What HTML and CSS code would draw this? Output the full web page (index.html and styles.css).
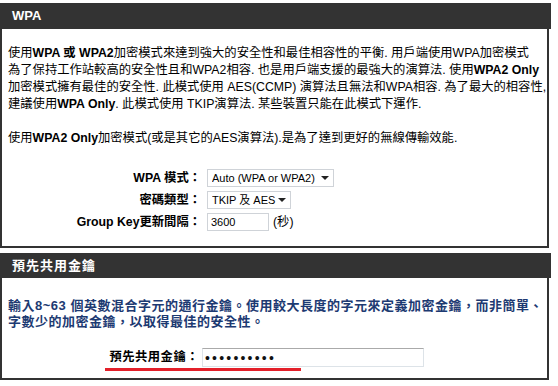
FILE: index.html
```html
<!DOCTYPE html>
<html>
<head>
<meta name="viewport" content="width=device-width, initial-scale=1.0">
<link rel="stylesheet" href="styles.css">
</head>
<body>

<div class="panel">
  <div class="panel-head">WPA</div>
  <div class="panel-body">
    <p class="desc">使用<b>WPA 或 WPA2</b>加密模式來達到強大的安全性和最佳相容性的平衡. 用戶端使用WPA加密模式<br>為了保持工作站較高的安全性且和WPA2相容. 也是用戶端支援的最強大的演算法. 使用<b>WPA2 Only</b><br>加密模式擁有最佳的安全性. 此模式使用 AES(CCMP) 演算法且無法和WPA相容. 為了最大的相容性,<br>建議使用<b>WPA Only</b>. 此模式使用 TKIP演算法. 某些裝置只能在此模式下運作.</p>
    <p class="desc">使用<b>WPA2 Only</b>加密模式(或是其它的AES演算法).是為了達到更好的無線傳輸效能.</p>
    <div class="fields">
      <label>WPA 模式：</label>
      <span class="select mode">
        <select>
          <option>Auto (WPA or WPA2)</option>
          <option>WPA2 Only</option>
          <option>WPA Only</option>
        </select>
      </span>
      <label>密碼類型：</label>
      <span class="select cipher">
        <select>
          <option>TKIP 及 AES</option>
          <option>TKIP</option>
          <option>AES</option>
        </select>
      </span>
      <label>Group Key更新間隔：</label>
      <span class="interval"><input type="text" class="text-input" value="3600"> (秒)</span>
    </div>
  </div>
</div>

<div class="panel psk">
  <div class="panel-head">預先共用金鑰</div>
  <div class="panel-body">
    <p class="note">輸入8~63 個英數混合字元的通行金鑰。使用較大長度的字元來定義加密金鑰，而非簡單、<br>字數少的加密金鑰，以取得最佳的安全性。</p>
    <div class="psk-row">
      <label>預先共用金鑰：</label>
      <input type="password" class="psk-input" value="1234567890">
      <span class="mark"></span>
    </div>
  </div>
</div>

</body>
</html>
```

FILE: styles.css
```css
* {box-sizing: border-box;}
body {
  margin: 0;
  font: 12.3px/17px "Liberation Sans", "Noto Sans CJK TC", sans-serif;
  color: #000;
  background: #fff;
}
.panel {
  width: 551px;
  margin-top: 3px;
}
.panel.psk {
  margin-top: 5px;
}
.panel-head {
  background: #333;
  color: #fff;
  font-weight: bold;
  font-size: 13px;
  height: 26px;
  line-height: 26px;
  padding-left: 12px;
}
.psk .panel-head {
  height: 25px;
  line-height: 25px;
  letter-spacing: 1px;
}
.panel-body {
  border: 2px solid #333;
  border-top: 0;
  margin-right: 2px;
  padding: 16px 6px 15px;
}
.psk .panel-body {
  padding: 20px 6px 11px;
}
.desc {
  margin: 0 0 17px;
  white-space: nowrap;
}
.fields {
  display: grid;
  grid-template-columns: 193px max-content;
  column-gap: 6px;
  row-gap: 4px;
  align-items: center;
  justify-items: start;
  margin-top: 22px;
}
.fields label, .psk-row label {
  font-weight: bold;
  text-align: right;
  justify-self: end;
}
.select {
  position: relative;
  display: inline-block;
  height: 18px;
}
.select select {
  display: block;
  appearance: none;
  -webkit-appearance: none;
  height: 18px;
  border: 1px solid #cfd3d8;
  background: #fff;
  font: 11px "Liberation Sans", "Noto Sans CJK TC", sans-serif;
  color: #000;
  padding: 0 0 0 4px;
  border-radius: 0;
  outline: none;
}
.select::after {
  content: "";
  position: absolute;
  top: 7px;
  right: 5px;
  border-left: 4px solid transparent;
  border-right: 4px solid transparent;
  border-top: 4px solid #222;
  pointer-events: none;
}
.select.mode select {width: 127px;}
.select.cipher select {width: 84px;}
.interval {
  display: flex;
  align-items: center;
  gap: 4px;
}
.text-input {
  width: 62px;
  height: 18px;
  border: 1px solid #cfd3d8;
  padding: 0 3px;
  font: 11px "Liberation Sans", sans-serif;
}
.note {
  margin: 0;
  white-space: nowrap;
  color: #1d3a72;
  font-weight: bold;
  font-size: 13px;
  line-height: 16px;
  letter-spacing: 0.5px;
}
.psk-row {
  position: relative;
  display: grid;
  grid-template-columns: 191px 222px;
  column-gap: 3px;
  align-items: center;
  margin-top: 18px;
}
.psk-row label {
  letter-spacing: 0.5px;
}
.psk-input {
  height: 19px;
  border: 1px solid #dde3e8;
  border-top-color: #aaa;
  padding: 0 2px;
  font: 14px "Liberation Sans", sans-serif;
  letter-spacing: 2.2px;
  color: #111;
}
.mark {
  position: absolute;
  left: 97px;
  top: 20px;
  width: 196px;
  height: 3px;
  background: #e3202a;
}
```
